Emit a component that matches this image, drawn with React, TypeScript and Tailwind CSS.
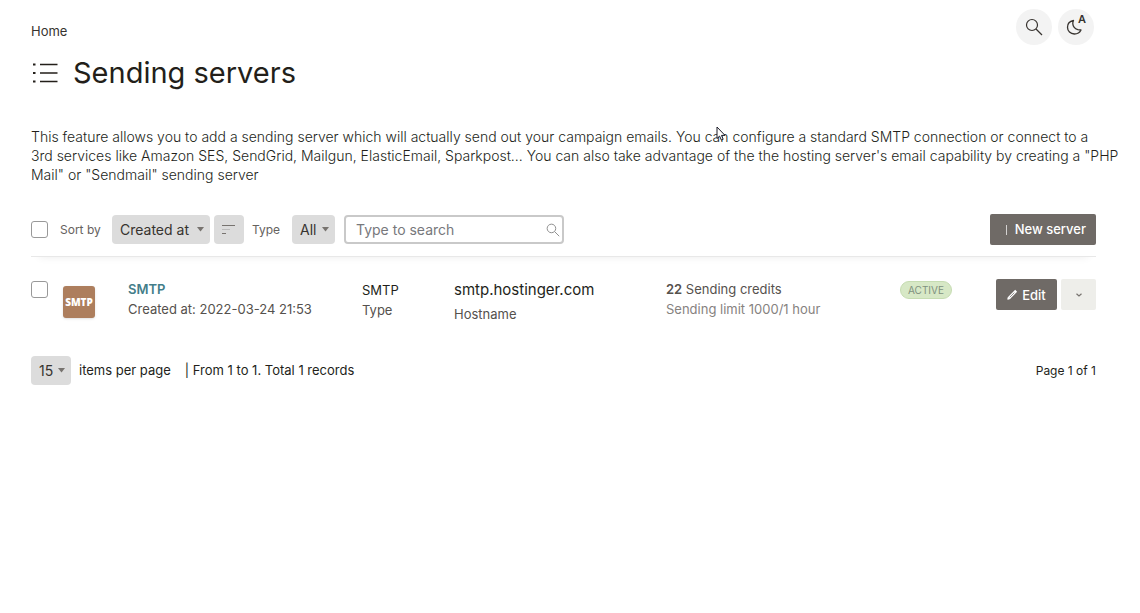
import { useState, ReactNode } from "react";

type Server = {
  id: number;
  name: string;
  createdAt: string;
  type: string;
  hostname: string;
  credits: number;
  limit: string;
  status: string;
};

const servers: Server[] = [
  {
    id: 1,
    name: "SMTP",
    createdAt: "2022-03-24 21:53",
    type: "SMTP",
    hostname: "smtp.hostinger.com",
    credits: 22,
    limit: "1000/1 hour",
    status: "Active",
  },
];

function SearchIcon({ size, className }: { size: number; className?: string }) {
  return (
    <svg width={size} height={size} viewBox="0 0 18 18" fill="none" stroke="currentColor" strokeWidth="1.2" className={className}>
      <circle cx="7" cy="7" r="5.5" />
      <path d="M11 11l6 6" />
    </svg>
  );
}

function MoonIcon() {
  return (
    <svg width="20" height="20" viewBox="0 0 20 20" fill="none" stroke="currentColor" strokeWidth="1.3" strokeLinejoin="round">
      <path d="M7.500 3.500C4 4.200 1.500 6.800 1.500 10.200C1.500 14 4.500 17 8.300 17C11.300 17 13.800 15.600 15 13L11.800 12.600C9 11.800 7 9.500 6.800 6.800C6.700 5.500 7 4.500 7.500 3.500Z" />
    </svg>
  );
}

function ListIcon() {
  return (
    <svg width="28" height="24" viewBox="0 0 28 24" className="text-[#231f1a]" fill="none" stroke="currentColor" strokeWidth="1.6">
      <path d="M9 3.500h17.500M9 12h17.500M9 20.500h17.500" />
      <path d="M2 3.500h2.500M2 12h2.500M2 20.500h2.500" strokeWidth="2.200" />
    </svg>
  );
}

function PencilIcon() {
  return (
    <svg width="11" height="11" viewBox="0 0 12 12" fill="none" stroke="currentColor" strokeLinejoin="round">
      <path d="M2.200 9.800L10 2" strokeWidth="3" />
      <path d="M.8 11.200l.6-2.400 1.800 1.800z" fill="currentColor" />
      <path d="M3 9l5-5" stroke="#6f6a66" strokeWidth=".8" />
    </svg>
  );
}

function Pointer() {
  return (
    <svg width="11" height="16" viewBox="0 0 11 16" className="pointer-events-none absolute left-[716px] top-[126px]">
      <path d="M1 1v11.500l2.600-2.400 1.800 4 1.800-.8-1.700-3.900H9L1 1z" fill="#fff" stroke="#1c1c28" strokeWidth="1" />
    </svg>
  );
}

function Select({ label, width, children }: { label: string; width: string; children: ReactNode }) {
  return (
    <div className={`relative shrink-0 ${width}`}>
      <select
        aria-label={label}
        className="block h-[29px] w-full appearance-none rounded bg-[#dcdcdc] pl-2 text-sm text-[#37332f]"
      >
        {children}
      </select>
      <svg width="7" height="5" viewBox="0 0 7 5" className="pointer-events-none absolute right-1.5 top-3 text-[#77736f]">
        <path d="M0 0h7L3.500 4.500z" fill="currentColor" />
      </svg>
    </div>
  );
}

function ServerRow({ server }: { server: Server }) {
  return (
    <li className="grid grid-cols-[32px_65px_234fr_92fr_212fr_234fr_96fr_100px] items-start pt-6 text-[13px] leading-5 text-[#55514d]">
      <input
        type="checkbox"
        aria-label={`Select ${server.name}`}
        className="size-[17px] appearance-none rounded-[3px] border border-[#999] bg-white"
      />
      <div className="mt-[5px] flex size-8 items-center justify-center rounded-[3px] bg-[#ad7e5d] font-['Open_Sans',sans-serif] text-[10px] font-extrabold text-white shadow-sm">
        SMTP
      </div>
      <div className="-mt-0.5">
        <a href="#" className="font-semibold text-[#437d89]">{server.name}</a>
        <p>Created at: {server.createdAt}</p>
      </div>
      <div className="-mt-px">
        <p className="text-[#231f1a]">{server.type}</p>
        <p>Type</p>
      </div>
      <div className="-mt-px">
        <p className="text-[15px] text-[#231f1a]">{server.hostname}</p>
        <p className="mt-1">Hostname</p>
      </div>
      <div className="-mt-0.5">
        <p><strong className="font-semibold">{server.credits}</strong> Sending credits</p>
        <p className="text-[#86827f]">Sending limit {server.limit}</p>
      </div>
      <span className="flex h-[18px] w-[52px] items-center justify-center rounded-full border border-[#c6dcb2] bg-[#d7e8c6] text-[10px] uppercase text-[#7f9180]">
        {server.status}
      </span>
      <div className="-mt-0.5 flex gap-1">
        <button className="flex h-[31px] w-[61px] items-center justify-center gap-1 rounded-[2px] bg-[#6f6a66] font-medium text-white">
          <PencilIcon /> Edit
        </button>
        <button aria-label="More actions" className="flex h-[31px] flex-1 items-center justify-center rounded-[2px] bg-[#eeeeea] text-[#77736f]">
          <svg width="6" height="4" viewBox="0 0 6 4" fill="none" stroke="currentColor" strokeWidth="1.2">
            <path d="M.5.8L3 3 5.500.8" />
          </svg>
        </button>
      </div>
    </li>
  );
}

export default function App() {
  const [keyword, setKeyword] = useState("");

  return (
    <div className="relative min-h-screen bg-white pl-[31px] pr-11 font-['Inter',sans-serif] text-[#37332f]">
      {/* Page header */}
      <header className="flex items-start justify-between pt-[9px]">
        <nav className="pt-3">
          <a href="#" className="block text-[13px] leading-5">Home</a>
        </nav>
        <div className="mr-0.5 flex gap-1.5">
          <button aria-label="Search" className="flex size-9 items-center justify-center rounded-full bg-[#f3f3f3]">
            <SearchIcon size={18} />
          </button>
          <button aria-label="Theme" className="relative flex size-9 items-center justify-center rounded-full bg-[#f3f3f3]">
            <MoonIcon />
            <span className="absolute right-2 top-0.5 text-[11px] font-semibold">A</span>
          </button>
        </div>
      </header>
      <h1 className="mt-2 flex items-center gap-3.5 text-[29px] leading-10 text-[#231f1a]">
        <ListIcon />
        Sending servers
      </h1>

      <p className="-mr-7 mt-[34px] text-sm font-light leading-[19px] text-[#231f1a]">
        This feature allows you to add a sending server which will actually send out your campaign emails. You can configure a
        standard SMTP connection or connect to a
        <br />
        3rd services like Amazon SES, SendGrid, Mailgun, ElasticEmail, Sparkpost... You can also take advantage of the the
        hosting server's email capability by creating a "PHP Mail" or "Sendmail" sending server
      </p>

      {/* Filters */}
      <div className="mt-[30px] flex items-center justify-between border-b border-[#e8e8e8] pb-[11px] shadow-[0_8px_8px_-8px_rgba(0,0,0,0.08)]">
        <div className="flex items-center text-[12px] text-[#66625e]">
          <input
            type="checkbox"
            aria-label="Select all"
            className="size-[17px] appearance-none rounded-[3px] border border-[#999] bg-white"
          />
          <span className="ml-3 w-[52px]">Sort by</span>
          <Select label="Sort by" width="w-[98px]">
            <option>Created at</option>
            <option>Name</option>
          </Select>
          <button aria-label="Sort direction" className="ml-1 flex h-[29px] w-[30px] items-center justify-center rounded bg-[#dcdcdc]">
            <svg width="14" height="12" viewBox="0 0 14 12" fill="none" stroke="#77736f">
              <path d="M0 1.500h13" />
              <path d="M0 5.500h8" stroke="#bbb" />
              <path d="M0 9.500h4" />
            </svg>
          </button>
          <span className="ml-2 w-10">Type</span>
          <Select label="Type" width="w-[43px]">
            <option>All</option>
            <option>SMTP</option>
          </Select>
          <div className="relative ml-[9px]">
            <input
              type="text"
              aria-label="Search servers"
              value={keyword}
              onChange={e => setKeyword(e.target.value)}
              placeholder="Type to search"
              className="block h-[29px] w-[220px] rounded border-2 border-[#c9c9c9] pl-2.5 pr-7 text-sm placeholder:text-[#77787c]"
            />
            <SearchIcon size={14} className="absolute right-1 top-2 text-[#888]" />
          </div>
        </div>
        <button className="flex h-[31px] w-[106px] items-center justify-end gap-2 rounded-[2px] bg-[#6f6a66] pr-2.5 text-[13px] font-medium text-white">
          <span className="h-2.5 w-px bg-white/70" />
          New server
        </button>
      </div>

      {/* Server list */}
      <ul>
        {servers.map(server => <ServerRow key={server.id} server={server} />)}
      </ul>

      {/* Pagination */}
      <footer className="mt-8 flex items-center justify-between text-[13px] text-[#231f1a]">
        <div className="flex items-center">
          <Select label="Items per page" width="w-10">
            <option>15</option>
            <option>25</option>
            <option>50</option>
          </Select>
          <span className="ml-2">items per page</span>
          <span className="ml-3.5">| From 1 to 1. Total 1 records</span>
        </div>
        <span className="text-[12px]">Page 1 of 1</span>
      </footer>

      <Pointer />
    </div>
  );
}
